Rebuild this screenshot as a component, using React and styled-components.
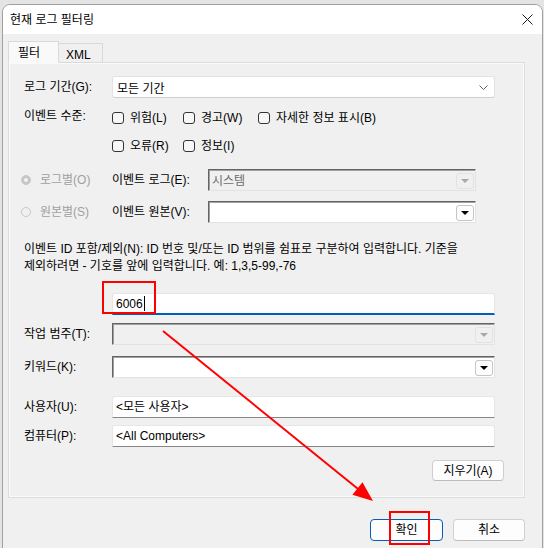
import React from 'react';
import styled, { createGlobalStyle } from 'styled-components';

const FONT = `"Liberation Sans", "Noto Sans CJK KR", sans-serif`;

const GlobalStyle = createGlobalStyle`
  html, body {
    margin: 0;
    padding: 0;
    background: #e4e4e4;
  }
  body {
    font-family: ${FONT};
    font-size: 12px;
    color: #000;
  }
  * {
    box-sizing: border-box;
  }
`;

const Screen = styled.div`
  position: relative;
  width: 544px;
  height: 548px;
  overflow: hidden;
  padding: 4px 0 0 2px;
`;

const Window = styled.div`
  width: 541px;
  height: 560px;
  border: 1px solid #a0a0a0;
  border-radius: 8px 8px 0 0;
  background: #f0f0f0;
  overflow: hidden;
  display: flex;
  flex-direction: column;
`;

const TitleBar = styled.div`
  height: 29px;
  flex: none;
  background: #fff;
  display: flex;
  align-items: center;
  justify-content: space-between;
  padding: 0 9px 0 7px;
`;

const Title = styled.span`
  font-size: 12px;
  line-height: 16px;
`;

const Body = styled.div`
  padding: 7px 17px 0 5px;
`;

const Tabs = styled.div`
  display: flex;
  align-items: flex-end;
  height: 22px;
  position: relative;
  z-index: 1;
`;

const Tab = styled.div`
  height: ${(p) => (p.$active ? '22px' : '20px')};
  width: ${(p) => (p.$active ? '51px' : '44px')};
  padding: 3px 0 0 ${(p) => (p.$active ? '9px' : '7px')};
  background: ${(p) => (p.$active ? '#f9f9f9' : '#f0f0f0')};
  border: 1px solid #d9d9d9;
  border-bottom: ${(p) => (p.$active ? '1px solid #f9f9f9' : '1px solid #d9d9d9')};
  border-left: ${(p) => (p.$active ? '1px solid #d9d9d9' : 'none')};
  line-height: 16px;
`;

const Panel = styled.div`
  margin-top: -1px;
  height: 436px;
  border: 1px solid #dcdcdc;
  box-shadow: inset 1px 1px 0 #fafafa, inset -1px -1px 0 #fafafa;
  background: #f0f0f0;
  padding: 0 29px 0 15px;
  display: flex;
  flex-direction: column;
`;

const FieldRow = styled.div`
  display: grid;
  grid-template-columns: 88px 1fr;
  align-items: ${(p) => (p.$top ? 'start' : 'center')};
  margin-top: ${(p) => p.$gap}px;
`;

const Label = styled.span`
  line-height: 16px;
  white-space: nowrap;
  color: ${(p) => (p.$muted ? '#a0a0a0' : '#000')};
`;

const SelectBox = styled.div`
  height: 22px;
  background: #fff;
  border: 1px solid #e2e2e2;
  border-bottom-color: #cfcfcf;
  border-radius: 3px;
  display: flex;
  align-items: center;
  justify-content: space-between;
  padding: 0 6px 0 4px;
`;

const TextBox = styled.div`
  height: ${(p) => p.$h || 22}px;
  background: #fff;
  border: 1px solid #e6e6e6;
  border-bottom: ${(p) => (p.$focused ? '2px solid #005fb8' : '1px solid #868686')};
  border-radius: 3px 3px 0 0;
  display: flex;
  align-items: center;
  padding: 0 3px;
  line-height: 16px;
`;

const Caret = styled.span`
  display: inline-block;
  width: 1px;
  height: 15px;
  background: #000;
  margin-left: 1px;
`;

const CheckGrid = styled.div`
  display: grid;
  grid-template-columns: 71px 75px auto;
  row-gap: 6px;
`;

const Check = styled.label`
  display: flex;
  align-items: center;
  gap: 6px;
  height: 22px;
  white-space: nowrap;
  line-height: 16px;
`;

const Box = styled.span`
  width: 12px;
  height: 12px;
  border: 1px solid #333;
  border-radius: 3px;
  background: #f7f7f7;
  flex: none;
`;

const SourceRow = styled.div`
  display: grid;
  grid-template-columns: 88px 96px 268px;
  align-items: center;
  margin-top: ${(p) => p.$gap}px;
`;

const Radio = styled.label`
  display: flex;
  align-items: center;
  gap: 9px;
  margin-left: -3px;
  color: #a0a0a0;
  line-height: 16px;
`;

const RadioDot = styled.span`
  width: 10px;
  height: 10px;
  border-radius: 50%;
  flex: none;
  display: flex;
  align-items: center;
  justify-content: center;
  border: 1px solid #c8c8c8;
  background: ${(p) => (p.$checked ? '#c6c6c6' : '#f0f0f0')};

  &::after {
    content: '';
    width: 4px;
    height: 4px;
    border-radius: 50%;
    background: ${(p) => (p.$checked ? '#f4f4f4' : 'transparent')};
  }
`;

const Combo = styled.div`
  height: 22px;
  background: ${(p) => (p.$disabled ? '#f0f0f0' : '#fff')};
  border-top: 1px solid #646464;
  border-left: 1px solid #646464;
  border-right: 1px solid #e3e3e3;
  border-bottom: 1px solid #e3e3e3;
  box-shadow: inset 1px 1px 0 #a0a0a0;
  display: flex;
  align-items: center;
  justify-content: space-between;
  padding: 1px 1px 0 3px;
  color: #6d6d6d;
  line-height: 16px;
`;

const DropButton = styled.span`
  width: 18px;
  height: 16px;
  border: 1px solid ${(p) => (p.$disabled ? '#e2e2e2' : '#c4c4c4')};
  border-radius: 3px;
  background: ${(p) => (p.$disabled ? '#f0f0f0' : '#fdfdfd')};
  display: flex;
  align-items: center;
  justify-content: center;

  &::after {
    content: '';
    border-left: 4px solid transparent;
    border-right: 4px solid transparent;
    border-top: 4px solid ${(p) => (p.$disabled ? '#a8a8a8' : '#000')};
    margin-top: 1px;
  }
`;

const Help = styled.p`
  margin: 18px 0 0;
  line-height: 17px;
`;

const Actions = styled.div`
  display: flex;
  justify-content: flex-end;
  gap: 10px;
  margin-top: ${(p) => p.$gap}px;
  margin-right: ${(p) => p.$right || 0}px;
`;

const Button = styled.button`
  font-family: ${FONT};
  font-size: 12px;
  color: #000;
  width: ${(p) => p.$w}px;
  height: ${(p) => p.$h}px;
  padding: 0;
  background: #fdfdfd;
  border: 1px solid ${(p) => (p.$primary ? '#005fb8' : '#d0d0d0')};
  border-bottom-color: ${(p) => (p.$primary ? '#005fb8' : '#bcbcbc')};
  border-radius: 4px;
  line-height: 16px;
`;

const Footer = styled.div`
  padding: 21px 17px 0 0;
  display: flex;
  justify-content: flex-end;
  gap: 10px;
`;

const Highlight = styled.div`
  position: absolute;
  left: ${(p) => p.$x}px;
  top: ${(p) => p.$y}px;
  width: ${(p) => p.$w}px;
  height: ${(p) => p.$h}px;
  border: 2px solid #f00;
  pointer-events: none;
`;

const Overlay = styled.svg`
  position: absolute;
  left: 0;
  top: 0;
  pointer-events: none;
`;

const CloseIcon = () => (
  <svg width="11" height="11" viewBox="0 0 11 11">
    <path d="M0.5 0.5 L10.5 10.5 M10.5 0.5 L0.5 10.5" stroke="#1a1a1a" strokeWidth="1" />
  </svg>
);

const Chevron = () => (
  <svg width="9" height="5" viewBox="0 0 9 5">
    <path d="M0.5 0.5 L4.5 4.5 L8.5 0.5" fill="none" stroke="#606060" strokeWidth="1" />
  </svg>
);

const LEVELS = [
  ['위험(L)', '경고(W)', '자세한 정보 표시(B)'],
  ['오류(R)', '정보(I)'],
];

// arrow from the event id field toward the OK button
const ARROW = { x1: 163, y1: 331, x2: 373, y2: 501 };

const arrowHead = ({ x1, y1, x2, y2 }, len = 20, half = 8) => {
  const dx = x2 - x1;
  const dy = y2 - y1;
  const d = Math.hypot(dx, dy);
  const ux = dx / d;
  const uy = dy / d;
  const bx = x2 - ux * len;
  const by = y2 - uy * len;
  return [
    [x2, y2],
    [bx - uy * half, by + ux * half],
    [bx + uy * half, by - ux * half],
  ]
    .map((p) => p.join(','))
    .join(' ');
};

const App = () => {
  const head = arrowHead(ARROW);
  const ux = (ARROW.x2 - ARROW.x1) / Math.hypot(ARROW.x2 - ARROW.x1, ARROW.y2 - ARROW.y1);
  const uy = (ARROW.y2 - ARROW.y1) / Math.hypot(ARROW.x2 - ARROW.x1, ARROW.y2 - ARROW.y1);

  return (
    <>
      <GlobalStyle />
      <Screen>
        <Window>
          <TitleBar>
            <Title>현재 로그 필터링</Title>
            <CloseIcon />
          </TitleBar>
          <Body>
            <Tabs>
              <Tab $active>필터</Tab>
              <Tab>XML</Tab>
            </Tabs>
            <Panel>
              <FieldRow $gap={13}>
                <Label>로그 기간(G):</Label>
                <SelectBox>
                  <span>모든 기간</span>
                  <Chevron />
                </SelectBox>
              </FieldRow>

              <FieldRow $gap={9} $top>
                <Label style={{ marginTop: 1 }}>이벤트 수준:</Label>
                <CheckGrid>
                  {LEVELS.map((row) =>
                    row.map((text, i) => (
                      <Check key={text} style={i === 0 ? { gridColumn: 1 } : undefined}>
                        <Box />
                        {text}
                      </Check>
                    ))
                  )}
                </CheckGrid>
              </FieldRow>

              <SourceRow $gap={12}>
                <Radio>
                  <RadioDot $checked />
                  로그별(O)
                </Radio>
                <Label>이벤트 로그(E):</Label>
                <Combo $disabled>
                  <span>시스템</span>
                  <DropButton $disabled />
                </Combo>
              </SourceRow>

              <SourceRow $gap={10}>
                <Radio>
                  <RadioDot />
                  원본별(S)
                </Radio>
                <Label>이벤트 원본(V):</Label>
                <Combo>
                  <span />
                  <DropButton />
                </Combo>
              </SourceRow>

              <Help>
                이벤트 ID 포함/제외(N): ID 번호 및/또는 ID 범위를 쉼표로 구분하여 입력합니다. 기준을
                <br />
                제외하려면 - 기호를 앞에 입력합니다. 예: 1,3,5-99,-76
              </Help>

              <FieldRow $gap={18}>
                <span />
                <TextBox $focused $h={22}>
                  6006
                  <Caret />
                </TextBox>
              </FieldRow>

              <FieldRow $gap={8}>
                <Label>작업 범주(T):</Label>
                <Combo $disabled>
                  <span />
                  <DropButton $disabled />
                </Combo>
              </FieldRow>

              <FieldRow $gap={11}>
                <Label>키워드(K):</Label>
                <Combo>
                  <span />
                  <DropButton />
                </Combo>
              </FieldRow>

              <FieldRow $gap={18}>
                <Label>사용자(U):</Label>
                <TextBox>&lt;모든 사용자&gt;</TextBox>
              </FieldRow>

              <FieldRow $gap={7}>
                <Label>컴퓨터(P):</Label>
                <TextBox>&lt;All Computers&gt;</TextBox>
              </FieldRow>

              <Actions $gap={13} $right={-9}>
                <Button $w={72} $h={21}>지우기(A)</Button>
              </Actions>
            </Panel>
          </Body>
          <Footer>
            <Button $primary $w={73} $h={22}>확인</Button>
            <Button $w={72} $h={22}>취소</Button>
          </Footer>
        </Window>

        <Highlight $x={102} $y={281} $w={54} $h={33} />
        <Highlight $x={389} $y={511} $w={41} $h={34} />

        <Overlay width="544" height="548" viewBox="0 0 544 548">
          <line
            x1={ARROW.x1}
            y1={ARROW.y1}
            x2={ARROW.x2 - ux * 14}
            y2={ARROW.y2 - uy * 14}
            stroke="#f00"
            strokeWidth="2"
          />
          <polygon points={head} fill="#f00" />
        </Overlay>
      </Screen>
    </>
  );
};

export default App;
